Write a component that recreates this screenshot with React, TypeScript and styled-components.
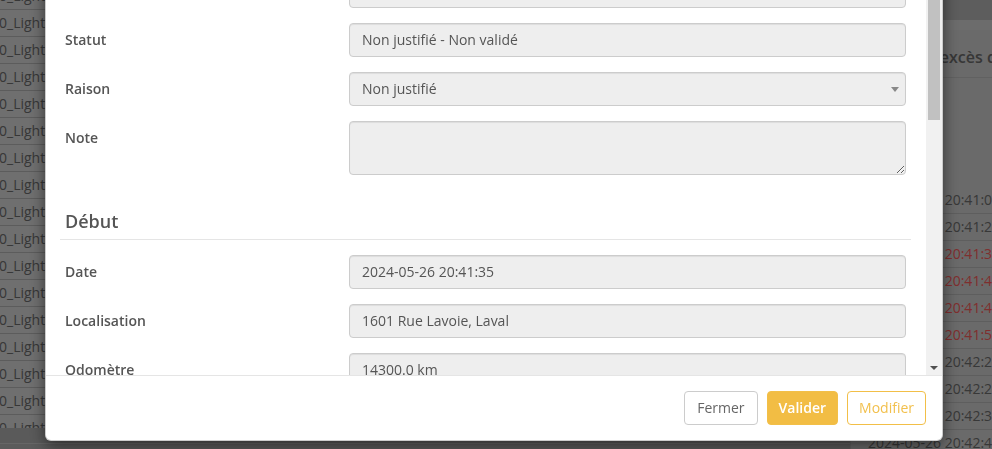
import React from 'react'
import styled, { createGlobalStyle } from 'styled-components'

const GlobalStyle = createGlobalStyle`
  html, body {
    margin: 0;
    padding: 0;
    height: 100%;
    overflow: hidden;
  }
  body {
    font-family: 'Open Sans', 'Liberation Sans', sans-serif;
    font-size: 14px;
    color: #333;
    background: #dedede;
  }
  * {
    box-sizing: border-box;
  }
`

/*-- background page --*/
const Page = styled.div`
  display: grid;
  grid-template-columns: 850px 1fr;
  height: 449px;
  overflow: hidden;
`

const LeftColumn = styled.div`
  display: flex;
  flex-flow: column;
  background: #dedede;
`

const TableScroll = styled.div`
  height: 428px;
  overflow: hidden;
`

const TableRows = styled.div`
  margin-top: -17px;
`

const TableRow = styled.div`
  height: 27px;
  line-height: 26px;
  border-bottom: 1px solid #b8b8b8;
  color: #6e6e6e;
  white-space: nowrap;
  text-indent: -1px;
`

const TableHScroll = styled.div`
  height: 15px;
  background: #b4b4b4;
`

const TableFooter = styled.div`
  flex: 1;
  border-top: 1px solid #cdcdcd;
  background: #b6b6b6;
`

const RightPanel = styled.div`
  display: flex;
  flex-flow: column;
  background: #d4d4d4;
  box-shadow: inset 1px 0 0 #c4c4c4;
`

const TopStrip = styled.div`
  height: 20px;
  background: #bababa;
`

const TopGap = styled.div`
  height: 10px;
  background: #d8d8d8;
`

const PanelHeading = styled.div`
  height: 48px;
  padding: 12px 0 0 18px;
  border-bottom: 1px solid #c2c2c2;
  font-size: 16px;
  font-weight: 600;
  line-height: 30px;
  color: #6e6e6e;
  white-space: nowrap;
`

const PanelBody = styled.div`
  padding-top: 109px;
`

const TimeRow = styled.div<{ $alert?: boolean }>`
  height: 27px;
  line-height: 26px;
  padding-left: 18px;
  border-bottom: 1px solid #bcbcbc;
  white-space: nowrap;
  color: ${(p) => (p.$alert ? '#ff5c5c' : '#707070')};
`

/*-- modal --*/
const Backdrop = styled.div`
  position: fixed;
  inset: 0;
  background: rgba(0, 0, 0, 0.5);
`

const ModalWrap = styled.div`
  position: fixed;
  inset: 0;
  display: flex;
  flex-flow: column;
  justify-content: flex-end;
  align-items: flex-start;
  padding: 0 0 8px 45px;
  overflow: hidden;
`

const Dialog = styled.div`
  flex-shrink: 0;
  display: flex;
  flex-flow: column;
  width: 898px;
  background: #fff;
  border: 1px solid rgba(0, 0, 0, 0.2);
  border-radius: 6px;
  box-shadow: 0 5px 15px rgba(0, 0, 0, 0.5);
`

const Header = styled.div`
  padding: 15px;
  border-bottom: 1px solid #e5e5e5;

  h4 {
    margin: 0;
    font-size: 18px;
    font-weight: 600;
    color: #333;
  }
`

const Body = styled.div`
  display: flex;
  height: 417px;
  overflow: hidden;
`

const Form = styled.div`
  flex: 1;
  min-width: 0;
  padding: 16px 15px 15px 14px;
  overflow: hidden;
`

const ScrollTrack = styled.div`
  display: flex;
  flex-flow: column;
  flex-shrink: 0;
  width: 16px;
  background: #f1f1f1;
`

const ScrollArrow = styled.div<{ $down?: boolean }>`
  display: flex;
  align-items: center;
  justify-content: center;
  height: 15px;

  &::after {
    content: '';
    width: 0;
    height: 0;
    border-left: 4px solid transparent;
    border-right: 4px solid transparent;
    ${(p) => (p.$down ? 'border-top: 4px solid #505050;' : 'border-bottom: 4px solid #505050;')}
  }
`

const ScrollRail = styled.div`
  flex: 1;
`

const ScrollThumb = styled.div`
  height: 147px;
  margin: 0 2px;
  background: #c1c1c1;
`

const FieldRow = styled.div`
  display: grid;
  grid-template-columns: 284px 1fr;
  padding: 0 5px;
  margin-bottom: 15px;
`

const Label = styled.label`
  padding-top: 7px;
  line-height: 20px;
  font-weight: 600;
  color: #555;
`

const Field = styled.div`
  display: flex;
  align-items: center;
  justify-content: space-between;
  height: 34px;
  padding: 6px 12px;
  line-height: 20px;
  color: #555;
  background: #eee;
  border: 1px solid #ccc;
  border-radius: 4px;
  box-shadow: inset 0 1px 1px rgba(0, 0, 0, 0.075);
  white-space: nowrap;
`

const Caret = styled.span`
  width: 0;
  height: 0;
  margin-right: -6px;
  border-left: 4px solid transparent;
  border-right: 4px solid transparent;
  border-top: 5px solid #888;
`

const NoteArea = styled.textarea`
  display: block;
  width: 100%;
  height: 54px;
  padding: 6px 12px;
  font: inherit;
  color: #555;
  background: #eee;
  border: 1px solid #ccc;
  border-radius: 4px;
  box-shadow: inset 0 1px 1px rgba(0, 0, 0, 0.075);
  resize: vertical;
  outline: none;
`

const SectionTitle = styled.h4`
  margin: 36px 0 15px;
  padding: 0 0 8px 5px;
  border-bottom: 1px solid #e5e5e5;
  font-size: 18px;
  font-weight: 600;
  line-height: 20px;
  color: #555;
`

const Footer = styled.div`
  display: flex;
  justify-content: flex-end;
  gap: 9px;
  padding: 15px 16px 15px 15px;
  border-top: 1px solid #e5e5e5;
`

const Button = styled.button<{ $variant: 'default' | 'primary' | 'outline' }>`
  height: 34px;
  padding: 6px ${(p) => (p.$variant === 'default' ? 12 : 11)}px;
  font-family: inherit;
  font-size: 14px;
  line-height: 20px;
  border-radius: 4px;
  cursor: pointer;
  border: 1px solid ${(p) => (p.$variant === 'default' ? '#ccc' : '#f2bf48')};
  background: ${(p) => (p.$variant === 'primary' ? '#f2bd44' : '#fff')};
  color: ${(p) => (p.$variant === 'primary' ? '#fff' : p.$variant === 'outline' ? '#f2c04d' : '#666')};
  font-weight: ${(p) => (p.$variant === 'primary' ? 600 : 400)};
`

/*-- data --*/
const leftRows = Array.from({ length: 17 }, () => '0_Light_Duty_Truck')

const times: { value: string, alert?: boolean }[] = [
  { value: '2024-05-26 20:41:05' },
  { value: '2024-05-26 20:41:22' },
  { value: '2024-05-26 20:41:35', alert: true },
  { value: '2024-05-26 20:41:41', alert: true },
  { value: '2024-05-26 20:41:47', alert: true },
  { value: '2024-05-26 20:41:53', alert: true },
  { value: '2024-05-26 20:42:20' },
  { value: '2024-05-26 20:42:27' },
  { value: '2024-05-26 20:42:35' },
  { value: '2024-05-26 20:42:41' },
]

interface RowProps {
  label: string
  value: string
  select?: boolean
}

const Row: React.FC<RowProps> = (props) => (
  <FieldRow>
    <Label>{ props.label }</Label>
    <Field>
      <span>{ props.value }</span>
      { props.select && <Caret /> }
    </Field>
  </FieldRow>
)

const App: React.FC = () => {
  return <>
    <GlobalStyle />
    <Page>
      <LeftColumn>
        <TableScroll>
          <TableRows>
            { leftRows.map((r, i) => <TableRow key={i}>{ r }</TableRow>) }
          </TableRows>
        </TableScroll>
        <TableHScroll />
        <TableFooter />
      </LeftColumn>
      <RightPanel>
        <TopStrip />
        <TopGap />
        <PanelHeading>Liste des excès de vitesse</PanelHeading>
        <PanelBody>
          { times.map((t, i) => <TimeRow key={i} $alert={t.alert}>{ t.value }</TimeRow>) }
        </PanelBody>
      </RightPanel>
    </Page>
    <Backdrop />
    <ModalWrap>
      <Dialog>
        <Header>
          <h4>Excès de vitesse</h4>
        </Header>
        <Body>
          <Form>
            <Row label='Conducteur' value='Martin Tremblay' />
            <Row label='Statut' value='Non justifié - Non validé' />
            <Row label='Raison' value='Non justifié' select />
            <FieldRow>
              <Label>Note</Label>
              <NoteArea readOnly />
            </FieldRow>
            <SectionTitle>Début</SectionTitle>
            <Row label='Date' value='2024-05-26 20:41:35' />
            <Row label='Localisation' value='1601 Rue Lavoie, Laval' />
            <Row label='Odomètre' value='14300.0 km' />
            <SectionTitle>Fin</SectionTitle>
            <Row label='Date' value='2024-05-26 20:41:53' />
            <Row label='Localisation' value='1725 Rue Lavoie, Laval' />
            <Row label='Odomètre' value='14300.4 km' />
          </Form>
          <ScrollTrack>
            <ScrollArrow />
            <ScrollRail>
              <ScrollThumb />
            </ScrollRail>
            <ScrollArrow $down />
          </ScrollTrack>
        </Body>
        <Footer>
          <Button $variant='default'>Fermer</Button>
          <Button $variant='primary'>Valider</Button>
          <Button $variant='outline'>Modifier</Button>
        </Footer>
      </Dialog>
    </ModalWrap>
  </>
}

export default App
